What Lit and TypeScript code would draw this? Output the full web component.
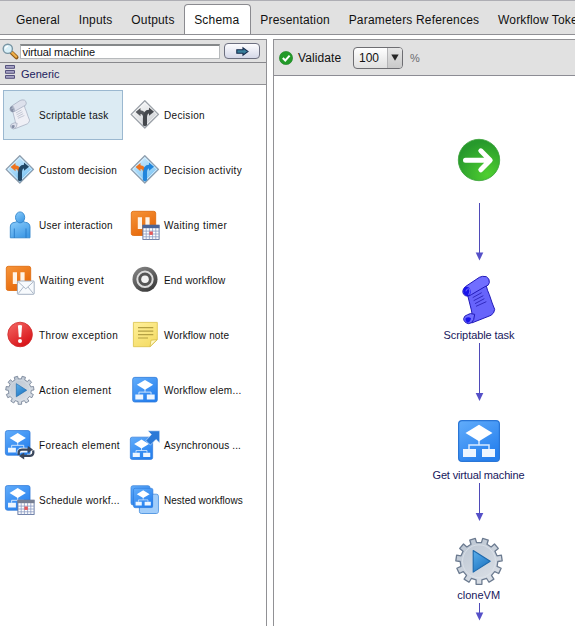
import { LitElement, html, svg, css, type SVGTemplateResult } from "lit";
import { customElement, state } from "lit/decorators.js";
import { classMap } from "lit/directives/class-map.js";
import { styleMap } from "lit/directives/style-map.js";

type Art = SVGTemplateResult;

const gearPath = (cx: number, cy: number, outer: number, inner: number, teeth: number): string => {
  const step = (Math.PI * 2) / teeth;
  const pts: string[] = [];
  for (let i = 0; i < teeth; i++) {
    const mid = -Math.PI / 2 + step * (i + 0.5);
    for (const [r, a] of [[inner, -0.27], [outer, -0.22], [outer, 0.22], [inner, 0.27]]) {
      const t = mid + a * step;
      pts.push(`${(cx + r * Math.cos(t)).toFixed(2)} ${(cy + r * Math.sin(t)).toFixed(2)}`);
    }
  }
  return `M${pts.join("L")}Z`;
};

const gear = (): Art => svg`
  <path d=${gearPath(24, 24, 23.2, 18.8, 11)} fill="url(#steel)" stroke="#6c7b90" stroke-width="1.3" stroke-linejoin="round"/>
  <circle cx="24" cy="24" r="16.5" fill="none" stroke="#dfe5ec" stroke-width="1" opacity=".7"/>
  <path d="M18.2 13.2 35.2 24 18.2 34.8Z" fill="url(#play)" stroke="#1d69ad" stroke-width="1.1" stroke-linejoin="round"/>`;

const flow = (): Art => svg`
  <rect x=".6" y=".6" width="40.8" height="40.8" rx="3.5" fill="url(#blue)" stroke="#2a76d6" stroke-width="1.2"/>
  <path d="M11 29V25H31V29M21 19V25" fill="none" stroke="#d8eaff" stroke-width="1.5"/>
  <path d="M21 4.8 34.5 13 21 21.2 7.5 13Z" fill="#fff"/>
  <path d="M5 29H18V37H5ZM24 29H37V37H24Z" fill="#eef6ff"/>`;

const scroll = (roll: string, sheet: string, edge: string, dark: string, ink: string): Art => svg`
  <path d="M146 470 198 464Q202 482 208 494Q217 522 224 538Q223 550 213 556L155 579Q160 556 154 540L142 492Z" fill=${sheet} stroke=${edge} stroke-width="3" stroke-linejoin="round"/>
  <path d="M136 470 178 442Q187 437 199 440Q210 446 208 458Q206 468 195 470L154 494Q140 503 131 493Q124 482 136 470Z" fill=${roll} stroke=${edge} stroke-width="3"/>
  <ellipse cx="141" cy="484" rx="11" ry="14" transform="rotate(-12 141 484)" fill=${dark} opacity=".85"/>
  <path d="M138 484Q140 474 149 477Q151 486 146 495" fill="none" stroke=${roll} stroke-width="3"/>
  <path d="M143 554Q150 548 164 553L161 569Q156 581 145 581Q131 577 131 566Q132 557 143 554Z" fill=${roll} stroke=${edge} stroke-width="3"/>
  <path d="M137 564Q146 559 153 565Q151 577 143 578Q134 573 137 564Z" fill=${dark} opacity=".85"/>
  <path d="M158 503 185 488M161 512 190 497M165 521 193 506M168 529 199 515" stroke=${ink} stroke-width="2.6"/>`;

const sign = (fill: string, edge: string, left: string, right: string): Art => svg`
  <path d="M14.8 .8 28.5 14.4 14.8 28 1.1 14.4Z" fill=${fill} stroke=${edge} stroke-width="1.3" stroke-linejoin="round"/>
  <path d="M14.8 2.6 26.7 14.4 14.8 26.2 2.9 14.4Z" fill="none" stroke="#fff" stroke-width=".8" opacity=".7"/>
  <path d="M13.1 25.2V17.7Q13.1 14 10.5 13.9V16.2L5.6 12 10.5 7.9V10.2Q13.5 10.2 15 13L15.6 16V25.2Z" fill=${left}/>
  <path d="M12.9 25.2V18Q13 9.9 19 9.7V7.5L24 11.7 19 15.8V13.6Q17 13.8 17 18V25.2L14.9 26.3Z" fill=${right}/>`;

const calendar = (head = "#4c6496"): Art => svg`
  <rect x="12.9" y="15.2" width="16.2" height="14.2" fill="#fff" stroke="#5b6f9d" stroke-width=".9"/>
  <rect x="12.6" y="14.9" width="16.8" height="3.3" fill=${head}/>
  <path d="M13 21.1H29M13 24H29M13 26.8H29M16.2 18V29.3M19.4 18V29.3M22.6 18V29.3M25.8 18V29.3" stroke="#8a9bc2" stroke-width=".8"/>
  <rect x="19.4" y="21.5" width="3.4" height="3.4" fill="#e85858"/>`;

const pause = (): Art => svg`
  <rect x="1.3" y="1.3" width="24.4" height="24.2" rx="2" fill="url(#orange)" stroke="#dc6709" stroke-width=".8"/>
  <path d="M7.8 7.3H12V19H7.8ZM15.4 7.3H19.6V19H15.4Z" fill="#fff3e6"/>`;

const smallFlow = (x: number, y: number, size: number): Art => svg`
  <g transform="translate(${x} ${y}) scale(${size / 42})">${flow()}</g>`;

const art: Record<string, () => Art> = {
  script: () => svg`<g transform="translate(-21.8 -90.1) scale(.207 .205)">${scroll("#dde1ec", "#eff0f6", "#98a1b5", "#76809a", "#9ba3b5")}</g>`,
  decision: () => sign("url(#silver)", "#9ba1a8", "#55585d", "#45484d"),
  custom: () => sign("url(#sky)", "#8d9dad", "#ee7420", "#214766"),
  activity: () => sign("url(#sky)", "#8d9dad", "#ee7420", "#2086dc"),
  user: () => svg`
    <path d="M5.3 27.8V17Q5.4 12.6 10 12.3L13 11.2H17.3L20.3 12.3Q24.8 12.6 25 17V27.8Z" fill="url(#person)" stroke="#3286cc" stroke-width=".9"/>
    <path d="M9.3 18.5V28M21 18.5V28" stroke="#2679c6" stroke-width=".9"/>
    <ellipse cx="15.1" cy="7.4" rx="4.6" ry="5.5" fill="url(#person)" stroke="#3286cc" stroke-width=".9"/>`,
  timer: () => svg`${pause()}${calendar()}`,
  event: () => svg`${pause()}
    <rect x="12.4" y="16" width="16.8" height="13.3" rx=".8" fill="#f7fafd" stroke="#9aa8bb" stroke-width=".9"/>
    <path d="M13 16.6 20.8 23.8 28.6 16.6M13 28.8 18.5 22M28.6 28.8 23 22" fill="none" stroke="#a5b1c2" stroke-width=".9"/>`,
  end: () => svg`
    <circle cx="15" cy="14.3" r="12.5" fill="url(#dark)"/>
    <circle cx="15" cy="14.3" r="7.7" fill="#555" stroke="#dcdcdc" stroke-width="2"/>
    <circle cx="15" cy="14.3" r="3.8" fill="#f3f3f3"/>`,
  error: () => svg`
    <circle cx="15.1" cy="14.5" r="12.3" fill="url(#red)" stroke="#cf2929" stroke-width=".8"/>
    <path d="M12.9 5.6Q15 4.6 17.1 5.6L16.2 17.3H13.8Z" fill="#fff"/><circle cx="15" cy="21.1" r="2" fill="#fff"/>`,
  note: () => svg`
    <path d="M3.4 2.4H27.3V19.6L20 26.7H3.4Z" fill="url(#paper)" stroke="#dfc653" stroke-width=".9"/>
    <path d="M20 26.6 21 20.2 27.2 19.6Z" fill="#fff9c6" stroke="#d7bd45" stroke-width=".8"/>
    <path d="M8 7.6H23.3M8 11.1H23.3M8 14.6H23.3M8 18H18" stroke="#b4a043" stroke-width="1.1"/>`,
  action: () => svg`<g transform="translate(.2 .6) scale(.61)">${gear()}</g>`,
  workflow: () => smallFlow(2.3, 2, 25.4),
  foreach: () => svg`${smallFlow(0, 0.2, 25.4)}
    <path d="M20 20H16.5Q13.6 20 13.6 23.5M22 26H25.5Q28.4 26 28.4 22" fill="none" stroke="#fff" stroke-width="4.4" opacity=".55"/>
    <path d="M13.8 25Q12.9 19.6 17 19.6H24M28.2 20.4Q29.1 25.8 25 25.8H18.5" fill="none" stroke="#3a475c" stroke-width="2.3"/>
    <path d="M22.8 16 28 19.6 22.8 23.2ZM19.2 22.4 14 26 19.2 29.6Z" fill="#3a475c"/>`,
  async: () => svg`${smallFlow(0, 6.8, 23)}
    <path d="M17.8 .8H29.7V13L26 9.4 20.4 15 15.8 10.6 21.4 4.6Z" fill="#2a79d7" stroke="#fff" stroke-width=".5"/>`,
  schedule: () => svg`${smallFlow(0, 0.2, 25.4)}${calendar("#777f92")}`,
  nested: () => svg`
    <rect x="1" y=".7" width="19" height="19.3" rx="2" fill="url(#blue)" stroke="#3580d8" stroke-width=".7"/>
    <rect x="9.4" y="9.2" width="19" height="19.3" rx="2" fill="#a9d1fa" stroke="#3987dc" stroke-width=".8"/>
    ${smallFlow(3.2, 3, 20)}
    <path d="M10 23V26Q10 28 12 28H26.5Q28 28 28 26.5V12Q28 9.8 25.5 9.8H23.2V23Z" fill="#9fcbfa" opacity=".75"/>`,
};

interface Tool { label: string; icon: string; track: number }

const tools: Tool[] = [
  { label: "Scriptable task", icon: "script", track: 0.26 },
  { label: "Decision", icon: "decision", track: 0.33 },
  { label: "Custom decision", icon: "custom", track: 0.28 },
  { label: "Decision activity", icon: "activity", track: 0.38 },
  { label: "User interaction", icon: "user", track: 0.24 },
  { label: "Waiting timer", icon: "timer", track: 0.4 },
  { label: "Waiting event", icon: "event", track: 0.38 },
  { label: "End workflow", icon: "end", track: 0.16 },
  { label: "Throw exception", icon: "error", track: 0.38 },
  { label: "Workflow note", icon: "note", track: 0.16 },
  { label: "Action element", icon: "action", track: 0.45 },
  { label: "Workflow elem...", icon: "workflow", track: 0.23 },
  { label: "Foreach element", icon: "foreach", track: 0.4 },
  { label: "Asynchronous ...", icon: "async", track: 0.16 },
  { label: "Schedule workf...", icon: "schedule", track: 0.24 },
  { label: "Nested workflows", icon: "nested", track: 0.02 },
];

const tabs = ["General", "Inputs", "Outputs", "Schema", "Presentation", "Parameters References", "Workflow Tokens"];

@customElement("app-root")
export class AppRoot extends LitElement {
  @state() private tab = "Schema";
  @state() private picked = "Scriptable task";

  static styles = css`
    :host {
      display: flex;
      flex-direction: column;
      width: 575px;
      height: 626px;
      overflow: hidden;
      background: #fff;
      color: #111;
      font-family: "Liberation Sans", Arial, sans-serif;
      font-size: 12px;
    }
    * { box-sizing: border-box; }
    svg { display: block; flex: none; overflow: visible; }
    .defs { position: absolute; width: 0; height: 0; }
    .tabs {
      display: flex;
      flex: none;
      height: 35px;
      padding: 4px 0 0 6.8px;
      background: #e1e1e1;
      border-top: 1px solid #aeaeb4;
      border-bottom: 1px solid #909095;
      letter-spacing: .18px;
      overflow: hidden;
    }
    .tab {
      flex: none;
      height: 31px;
      padding: 0 9.6px 0 9.2px;
      line-height: 30px;
      white-space: nowrap;
    }
    .tab.on {
      width: 67px;
      height: 32px;
      margin-top: -1px;
      line-height: 31px;
      padding: 0 0 0 9px;
      border: 1px solid #8b8b90;
      border-bottom: 0;
      border-radius: 4px 4px 0 0;
      background: #fff;
    }
    .body { display: flex; flex: 1; gap: 6px; padding-top: 4px; min-height: 0; }
    .side { width: 267px; border: solid #919195; border-width: 1px 1px 0 0; }
    .search {
      display: flex;
      align-items: center;
      height: 23px;
      padding-left: 2px;
      background: #e1e1e1;
      border-bottom: 1px solid #88888c;
    }
    .field {
      width: 200px;
      height: 15px;
      margin-left: 1px;
      padding-left: 1.5px;
      border: 1px solid #b7babc;
      border-top: 2px solid #85888a;
      background: #fff;
      font-size: 11px;
      line-height: 13px;
      letter-spacing: -.1px;
    }
    .go {
      display: flex;
      align-items: center;
      justify-content: center;
      width: 36px;
      height: 16px;
      margin-left: 4px;
      border: 1px solid #6d7080;
      border-radius: 4px;
      background: linear-gradient(#fdfdff, #d5d8e8);
    }
    .group {
      display: flex;
      align-items: center;
      gap: 6px;
      height: 22px;
      padding-left: 5px;
      background: #e1e1e1;
      border-bottom: 1px solid #919195;
      color: #22225e;
      font-size: 11px;
    }
    .group svg { margin-top: -3px; }
    .grid { display: grid; grid-template-columns: 120px 120px; gap: 5px; padding: 5px 0 0 3px; }
    .tool {
      display: flex;
      align-items: center;
      gap: 4px;
      height: 50px;
      padding-left: 1px;
      border: 1px solid transparent;
      font-size: 10px;
      white-space: nowrap;
    }
    .tool.on { border-color: #9bb8d0; background: #dcebf3; }
    .main {
      display: flex;
      flex-direction: column;
      flex: 1;
      border: solid #919195;
      border-width: 1px 0 0 1px;
    }
    .bar {
      display: flex;
      align-items: center;
      height: 36px;
      padding-left: 5px;
      background: #e1e1e1;
      border-bottom: 1px solid #8c8c94;
    }
    .validate { width: 55px; margin-left: 5px; letter-spacing: .1px; }
    .zoom {
      display: flex;
      align-items: center;
      width: 50px;
      height: 22px;
      border: 1px solid #6e6e72;
      border-radius: 4px;
      background: linear-gradient(#fff, #e0e0e0);
    }
    .value { width: 33px; padding-left: 5px; }
    .drop {
      display: flex;
      align-items: center;
      justify-content: center;
      flex: 1;
      height: 20px;
      border-left: 1px solid #b4b4b6;
      border-radius: 0 3px 3px 0;
      background: linear-gradient(#e6e6e6, #c9c9c9);
    }
    .unit { margin-left: 7px; color: #6a6a6e; font-size: 11px; }
    .canvas { flex: 1; }
    .caption { font-size: 11px; fill: #17175c; text-anchor: middle; }
    .link { stroke: #4f4ab8; stroke-width: 1; }
    .tip { fill: #5550c8; }
  `;

  private defs() {
    const grad = (id: string, a: string, b: string) => svg`
      <linearGradient id=${id} x1="0" y1="0" x2=".6" y2="1"><stop offset="0" stop-color=${a}/><stop offset="1" stop-color=${b}/></linearGradient>`;
    return html`<svg class="defs"><defs>
      ${grad("blue", "#62adfb", "#2680ee")}
      ${grad("steel", "#b8c3d0", "#d9dee5")}
      ${grad("play", "#5db0ec", "#1f76c2")}
      ${grad("silver", "#ffffff", "#cdd0d4")}
      ${grad("sky", "#d8f0ff", "#7ac4f4")}
      ${grad("orange", "#f6953a", "#e66607")}
      ${grad("person", "#8dcdfb", "#419be6")}
      ${grad("dark", "#8a8a8a", "#3e3e3e")}
      ${grad("red", "#f56a66", "#d81419")}
      ${grad("paper", "#fff09a", "#f5dd68")}
      <radialGradient id="glow" cx=".7" cy=".85" r=".8"><stop offset="0" stop-color="#4fcf30"/><stop offset="1" stop-color="#27992c"/></radialGradient>
    </defs></svg>`;
  }

  private link(from: number, tip: number) {
    return svg`<path class="link" d="M205.5 ${from - 76}V${tip - 83}"/>
      <path class="tip" d="M201.7 ${tip - 84}H209.3L205.5 ${tip - 76}Z"/>`;
  }

  render() {
    return html`
      ${this.defs()}
      <nav class="tabs">
        ${tabs.map((t) => html`<div class=${classMap({ tab: true, on: t === this.tab })} @click=${() => (this.tab = t)}>${t}</div>`)}
      </nav>
      <div class="body">
        <aside class="side">
          <div class="search">
            <svg width="17" height="17" viewBox="0 0 17 17">
              <path d="M9.5 9.5 14.5 14.3" stroke="#8f5a18" stroke-width="4" stroke-linecap="round"/>
              <path d="M10 9.6 14.2 13.7" stroke="#efae48" stroke-width="2.2" stroke-linecap="round"/>
              <circle cx="5.8" cy="5.8" r="4.6" fill="#d9f0f8" stroke="#7895a3" stroke-width="1.4"/>
              <path d="M3.3 5.5Q3.8 3.3 6.2 3.2" fill="none" stroke="#fff" stroke-width="1.3"/>
            </svg>
            <div class="field">virtual machine</div>
            <div class="go">
              <svg width="13" height="9" viewBox="0 0 13 9"><path d="M.8 2.8H7V.8L12 4.5 7 8.2V6.2H.8Z" fill="#397f9c" stroke="#172c4e" stroke-width="1.1"/></svg>
            </div>
          </div>
          <div class="group">
            <svg width="10" height="14" viewBox="0 0 10 14">
              <g fill="#a5a2c4" stroke="#55527e"><path d="M.5 .5H9.5V3.3H.5ZM.5 5.5H9.5V8.3H.5ZM.5 10.5H9.5V13.3H.5Z"/></g>
            </svg>
            Generic
          </div>
          <div class="grid">
            ${tools.map((t) => html`
              <div class=${classMap({ tool: true, on: t.label === this.picked })}
                style=${styleMap({ letterSpacing: `${t.track}px` })}
                @click=${() => (this.picked = t.label)}>
                <svg width="30" height="30" viewBox="0 0 30 30">${art[t.icon]()}</svg>${t.label}
              </div>`)}
          </div>
        </aside>
        <main class="main">
          <div class="bar">
            <svg width="14" height="14" viewBox="0 0 14 14">
              <circle cx="7" cy="7" r="6.6" fill="#239a29" stroke="#198020" stroke-width=".6"/>
              <path d="M3.8 7 6.3 9.5 10.6 4.7" fill="none" stroke="#fff" stroke-width="2"/>
            </svg>
            <span class="validate">Validate</span>
            <div class="zoom">
              <span class="value">100</span>
              <span class="drop"><svg width="8" height="7" viewBox="0 0 8 7"><path d="M.3 .4H7.7L4 6.8Z" fill="#262626"/></svg></span>
            </div>
            <span class="unit">%</span>
          </div>
          <svg class="canvas" width="301" height="550" viewBox="0 0 301 550">
            <g transform="translate(205 84)">
              <circle r="20.7" fill="url(#glow)" stroke="#39a137" stroke-width=".8"/>
              <path d="M-13.5 .3H10M1.8 -9.2 11.2 .3 1.8 9.8" fill="none" stroke="#fff" stroke-width="5" stroke-linecap="round" stroke-linejoin="round"/>
            </g>
            ${this.link(203, 260.5)}
            <g transform="translate(146 54) scale(.33333)">${scroll("#716eff", "#6764fb", "#2019b8", "#0804e8", "#2822b5")}</g>
            <text class="caption" x="205" y="263" textLength="71">Scriptable task</text>
            ${this.link(343, 401)}
            <g transform="translate(184 344)">${flow()}</g>
            <text class="caption" x="204.5" y="403" textLength="92">Get virtual machine</text>
            ${this.link(483, 521)}
            <g transform="translate(181 461.3)">${gear()}</g>
            <text class="caption" x="204.7" y="523" textLength="42.7">cloneVM</text>
            ${this.link(603, 620.5)}
          </svg>
        </main>
      </div>
    `;
  }
}
